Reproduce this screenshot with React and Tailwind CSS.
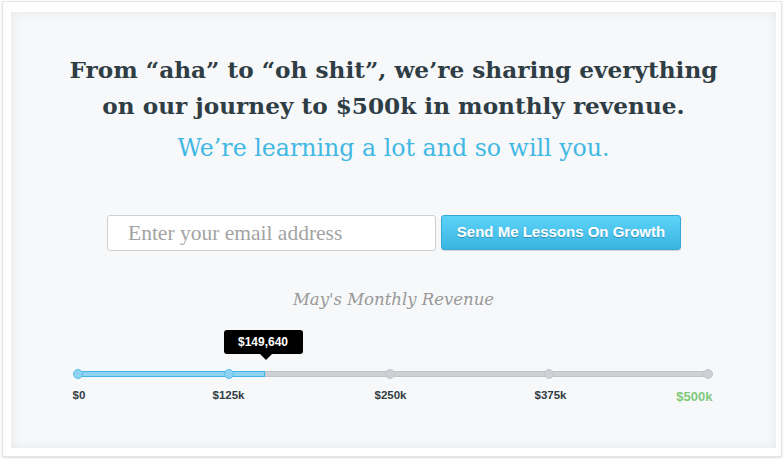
import React from 'react';

const ticks = [
  { label: '$0', value: 0, dot: 'left-0', text: 'left-[-5px] text-[#333c44]' },
  { label: '$125k', value: 125000, dot: 'left-[151px]', text: 'left-[151px] -translate-x-1/2 text-[#333c44]' },
  { label: '$250k', value: 250000, dot: 'left-[312px]', text: 'left-[313px] -translate-x-1/2 text-[#333c44]' },
  { label: '$375k', value: 375000, dot: 'left-[471px]', text: 'left-[473px] -translate-x-1/2 text-[#333c44]' },
  { label: '$500k', value: 500000, dot: 'left-[630px]', text: 'right-[-5px] top-[64px] text-[13px] text-[#7dc97a]' },
];

const revenue = 149640;
const fill = 187;

const App = () => {
  return (
    <div className="w-[784px] h-[459px] bg-white pt-[1px] pl-[2px]">
      <div className="w-[780px] h-[456px] bg-white border border-[#e4e5e7] shadow-[0_1px_2px_rgba(0,0,0,0.15)] pt-[10px] pl-[8px]">
        <div className="w-[765px] h-[436px] bg-[#f7f8fa] shadow-[inset_0_0_12px_rgba(0,0,0,0.07)] flex flex-col items-center">
          <h1 className="mt-[40px] text-center text-[#2f3d45] font-bold text-[23.2px] leading-[36px] font-['DejaVu_Serif',serif]">
            From “aha” to “oh shit”, we’re sharing everything<br />
            on our journey to $500k in monthly revenue.
          </h1>
          <p className="mt-[6px] text-[#41b8e4] text-[23.7px] leading-[36px] font-['DejaVu_Serif',serif]">
            We’re learning a lot and so will you.
          </p>

          <form className="mt-[49px] flex gap-[5px] pl-[1px]">
            <input
              type="text"
              placeholder="Enter your email address"
              className="w-[329px] h-[36px] bg-white border border-[#cfcfcf] rounded-[3px] px-[20px] text-[21.5px] text-[#444] placeholder-[#a3a3a3] outline-none font-['Liberation_Serif',serif]"
            />
            <button
              type="button"
              className="w-[240px] h-[35px] rounded-[3px] border border-[#34a9d6] bg-gradient-to-b from-[#5cd3f7] to-[#39b4e2] text-white font-bold text-[15px] [text-shadow:0_1px_0_rgba(0,0,0,0.25)] shadow-[0_1px_1px_rgba(0,0,0,0.15)] font-['Liberation_Sans',Arial,sans-serif]"
            >
              Send Me Lessons On Growth
            </button>
          </form>

          <p className="mt-[37px] italic text-[#999] text-[16.5px] leading-[24px] font-['DejaVu_Serif',serif]">
            May's Monthly Revenue
          </p>

          <div className="relative mt-[10px] w-[630px] ml-[-2px] h-[80px] font-['Liberation_Sans',Arial,sans-serif]">
            <div className="absolute left-[146px] top-[8px] w-[79px] h-[24px] bg-black rounded-[3px] flex items-center justify-center text-white font-bold text-[12px]">
              ${revenue.toLocaleString('en-US')}
              <div className="absolute bottom-[-6px] left-[36px] w-0 h-0 border-l-[6px] border-r-[6px] border-t-[6px] border-l-transparent border-r-transparent border-t-black" />
            </div>
            <div className="absolute left-0 right-0 top-[49px] h-[6px] rounded-full bg-[#cdd0d4] border border-[#bfc3c7]" />
            <div className="absolute left-0 top-[49px] h-[6px] bg-[#8fd3f3] border border-[#41b4e6]" style={{ width: fill }} />
            {ticks.map((t) => (
              <div
                key={t.label}
                className={`absolute top-[47px] w-[10px] h-[10px] rounded-full -ml-[5px] ${t.dot} ${t.value <= revenue ? 'bg-[#8fd3f3] border border-[#58bfea]' : 'bg-[#cdd0d4] border border-[#c3c6ca]'}`}
              />
            ))}
            {ticks.map((t) => (
              <span key={t.label + 'l'} className={`absolute top-[65px] text-[11.5px] font-bold ${t.text}`}>
                {t.label}
              </span>
            ))}
          </div>
        </div>
      </div>
    </div>
  );
};

export default App;
